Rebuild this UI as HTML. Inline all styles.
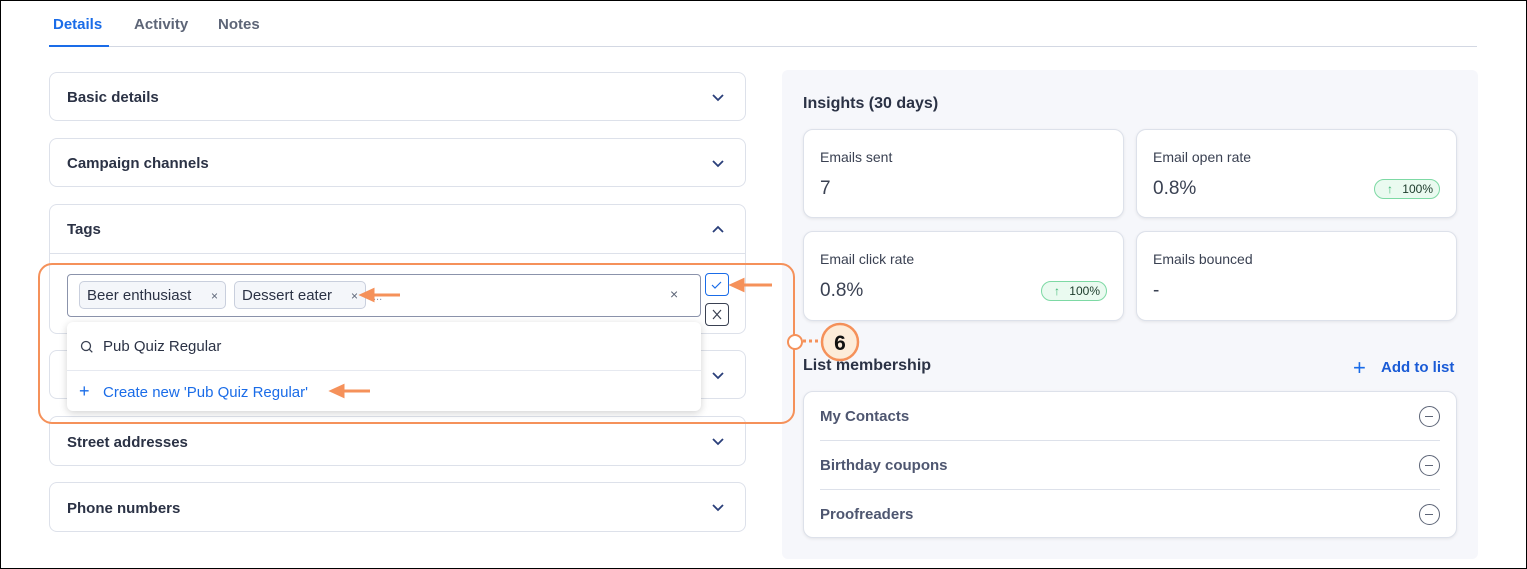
<!DOCTYPE html>
<html><head><meta charset="utf-8"><style>
*{box-sizing:border-box;margin:0;padding:0}
body{width:1527px;height:569px;position:relative;overflow:hidden;background:#fff;font-family:"Liberation Sans",sans-serif;color:#2b3245}
.frame{position:absolute;left:0;top:0;width:1527px;height:569px;border:1.5px solid #000;z-index:50;pointer-events:none}
.a{position:absolute}
.tab{position:absolute;top:16px;font-size:15px;font-weight:bold;color:#5d6577}
.acc{position:absolute;left:49px;width:697px;border:1px solid #dde1ea;border-radius:8px;background:#fff}
.acc .t{position:absolute;left:17px;font-size:15px;font-weight:bold;color:#2b3245}
.chev{position:absolute;right:20px;width:14px;height:9px}
.card{position:absolute;background:#fff;border:1px solid #dde1ea;border-radius:10px;box-shadow:0 1px 3px rgba(0,0,0,.08)}
.card .l{position:absolute;left:16px;top:19px;font-size:14px;color:#3a4152}
.card .v{position:absolute;left:16px;top:48px;font-size:19px;color:#3a4152}
.pill{position:absolute;right:16px;top:49px;width:66px;height:20px;border:1px solid #7dd9a4;background:#eafaf0;border-radius:10px;font-size:12px;color:#1b3a2a;line-height:18px;text-align:right;padding-right:6px}
.pill:before{content:"↑";position:absolute;left:12px;color:#3bb672;font-size:12px}
.row{position:absolute;left:16px;right:16px;height:49px;border-bottom:1px solid #dde1ea;font-size:15px;font-weight:bold;color:#4e5670;line-height:49px}
.row:last-child{border-bottom:none}
.minus{position:absolute;right:0;top:14px;width:21px;height:21px;border:1.6px solid #5d6577;border-radius:50%}
.minus:after{content:"";position:absolute;left:5px;top:8.5px;width:8px;height:1.6px;background:#5d6577}
.chip{position:absolute;top:281px;height:28px;border:1px solid #c9cfdd;border-radius:5px;background:#f4f6fa;font-size:15px;line-height:28px;padding-left:7px;color:#2b3245}
.chip span{position:absolute;right:7px;font-size:12px;color:#5d6577}
</style></head><body>
<div class="frame"></div>
<div class="tab" style="left:53px;color:#1a6ce8">Details</div>
<div class="tab" style="left:134px">Activity</div>
<div class="tab" style="left:218px">Notes</div>
<div class="a" style="left:49px;top:46px;width:1428px;height:1px;background:#d3d8e3"></div>
<div class="a" style="left:49px;top:45px;width:60px;height:2px;background:#1a6ce8"></div>

<svg width="0" height="0" style="position:absolute"><defs><symbol id="cv" viewBox="0 0 14 9"><path d="M2 2l5 5 5-5" fill="none" stroke="#2a3f7a" stroke-width="1.8"/></symbol></defs></svg>

<div class="acc" style="top:72px;height:49px"><div class="t" style="top:16px">Basic details</div><svg class="chev" style="top:20px"><use href="#cv"/></svg></div>
<div class="acc" style="top:138px;height:49px"><div class="t" style="top:16px">Campaign channels</div><svg class="chev" style="top:20px"><use href="#cv"/></svg></div>
<div class="acc" style="top:204px;height:130px"><div class="t" style="top:16px">Tags</div><svg class="chev" style="top:20px;transform:rotate(180deg)"><use href="#cv"/></svg><div class="a" style="left:0;right:0;top:48px;height:1px;background:#dde1ea"></div></div>
<div class="acc" style="top:350px;height:49px"><svg class="chev" style="top:20px"><use href="#cv"/></svg></div>
<div class="acc" style="top:416px;height:50px"><div class="t" style="top:17px">Street addresses</div><svg class="chev" style="top:20px"><use href="#cv"/></svg></div>
<div class="acc" style="top:482px;height:50px"><div class="t" style="top:17px">Phone numbers</div><svg class="chev" style="top:20px"><use href="#cv"/></svg></div>

<div class="a" style="left:67px;top:274px;width:634px;height:43px;border:1px solid #8b93ab;border-radius:4px;background:#fff"></div>
<div class="chip" style="left:79px;width:147px">Beer enthusiast<span>×</span></div>
<div class="chip" style="left:234px;width:132px">Dessert eater<span>×</span></div>
<div class="a" style="left:373px;top:291px;font-size:11px;color:#8b93ab">...</div>
<div class="a" style="left:670px;top:286px;font-size:14px;color:#5d6577">×</div>
<div class="a" style="left:705px;top:273px;width:24px;height:23px;border:1px solid #1a6ce8;border-radius:4px"><svg width="22" height="21"><path d="M6 11l3 3 6-6" fill="none" stroke="#1a6ce8" stroke-width="1.2"/></svg></div>
<div class="a" style="left:705px;top:303px;width:24px;height:23px;border:1px solid #3a4152;border-radius:4px"><svg width="22" height="21"><path d="M7 6l8 9M15 6l-8 9" fill="none" stroke="#3a4152" stroke-width="1.2"/></svg></div>

<div class="a" style="left:67px;top:322px;width:634px;height:89px;background:#fff;border-radius:6px;box-shadow:0 2px 8px rgba(0,0,0,.18)">
 <svg class="a" style="left:13px;top:18px" width="14" height="14"><circle cx="6" cy="6" r="4.5" fill="none" stroke="#3a4152" stroke-width="1.3"/><path d="M9.3 9.3l3 3" stroke="#3a4152" stroke-width="1.3"/></svg>
 <div class="a" style="left:36px;top:16px;font-size:15px;color:#2b3245">Pub Quiz Regular</div>
 <div class="a" style="left:0;right:0;top:48px;height:1px;background:#e6e9f0"></div>
 <div class="a" style="left:12px;top:59px;font-size:18px;color:#1a6ce8;font-weight:300">+</div>
 <div class="a" style="left:36px;top:62px;font-size:15px;color:#1a6ce8">Create new 'Pub Quiz Regular'</div>
</div>

<div class="a" style="left:38px;top:263px;width:757px;height:161px;border:2px solid #f5915a;border-radius:14px"></div>
<svg class="a" style="left:0;top:0" width="1527" height="569">
 <g stroke="#f5915a" stroke-width="3" fill="#f5915a">
  <path d="M772 285H742" fill="none"/><path d="M732 285l11-5v10z"/>
  <path d="M400 295H372" fill="none"/><path d="M362 295l11-5v10z"/>
  <path d="M370 391H342" fill="none"/><path d="M332 391l11-5v10z"/>
 </g>
 <path d="M803 341H822" stroke="#f5915a" stroke-width="3" stroke-dasharray="3 3"/>
 <circle cx="795" cy="342" r="7" fill="#fff" stroke="#f5915a" stroke-width="2"/>
 <circle cx="840" cy="342" r="18" fill="#fdecd9" stroke="#f5915a" stroke-width="2.5"/>
 <text x="840" y="350" text-anchor="middle" font-family="Liberation Sans" font-weight="bold" font-size="21" fill="#111">6</text>
</svg>

<div class="a" style="left:782px;top:70px;width:696px;height:489px;background:#f6f7fb;border-radius:6px;z-index:-1"></div>
<div class="a" style="left:803px;top:95px;font-size:16px;font-weight:bold;color:#2b3245">Insights (30 days)</div>
<div class="card" style="left:803px;top:129px;width:321px;height:89px"><div class="l">Emails sent</div><div class="v">7</div></div>
<div class="card" style="left:1136px;top:129px;width:321px;height:89px"><div class="l">Email open rate</div><div class="v">0.8%</div><div class="pill">100%</div></div>
<div class="card" style="left:803px;top:231px;width:321px;height:90px"><div class="l">Email click rate</div><div class="v">0.8%</div><div class="pill">100%</div></div>
<div class="card" style="left:1136px;top:231px;width:321px;height:90px"><div class="l">Emails bounced</div><div class="v">-</div></div>
<div class="a" style="left:803px;top:357px;font-size:16px;font-weight:bold;color:#2b3245">List membership</div>
<div class="a" style="left:1353px;top:355px;font-size:22px;color:#1a6ce8;font-weight:300">+</div>
<div class="a" style="left:1381px;top:359px;font-size:15px;font-weight:bold;color:#1a5bd6">Add to list</div>
<div class="card" style="left:803px;top:391px;width:654px;height:147px">
 <div class="row" style="top:0">My Contacts<div class="minus"></div></div>
 <div class="row" style="top:49px">Birthday coupons<div class="minus"></div></div>
 <div class="row" style="top:98px">Proofreaders<div class="minus"></div></div>
</div>
</body></html>
